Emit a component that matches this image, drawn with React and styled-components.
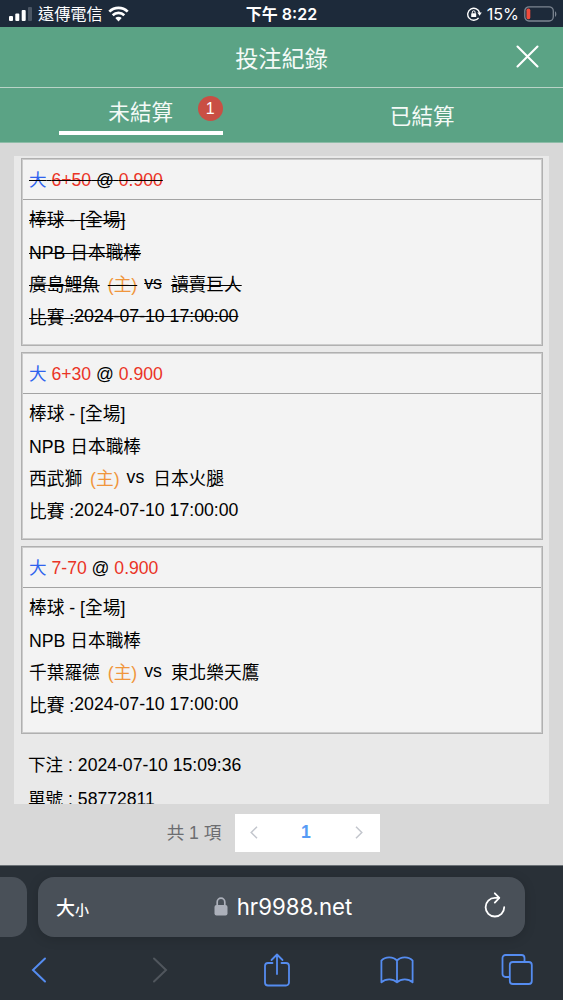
import React from "react";
import styled, { createGlobalStyle } from "styled-components";

const GlobalStyle = createGlobalStyle`
  * {
    box-sizing: border-box;
  }

  body {
    margin: 0;
    font-family: "Liberation Sans", "Noto Sans CJK TC", sans-serif;
  }
`;

const Screen = styled.div`
  display: flex;
  flex-direction: column;
  width: 563px;
  height: 1000px;
  overflow: hidden;
  background-color: #d8d8d8;
  color: #000;
  white-space: nowrap;
`;

const StatusBar = styled.div`
  display: grid;
  grid-template-columns: 1fr auto 1fr;
  align-items: center;
  height: 27px;
  padding: 1px 6px 0 9px;
  background-color: #1d2a3a;
  color: #fff;
  font-family: Inter, "Noto Sans CJK TC", sans-serif;
  font-size: 16.2px;
  line-height: 26px;
`;

const StatusSide = styled.div`
  display: flex;
  align-items: center;
  justify-content: ${props => (props.$end ? "flex-end" : "flex-start")};
  gap: 5px;
`;

const Time = styled.div`
  padding-right: 3px;
  font-weight: 600;
  font-size: 16px;
`;

const Header = styled.div`
  display: grid;
  grid-template-columns: 1fr auto 1fr;
  align-items: center;
  height: 61px;
  padding: 3px 24px 0;
  border-bottom: 1px solid #b9d3c7;
  background-color: #5ba385;
`;

const Title = styled.div`
  grid-column: 2;
  color: #f4faf7;
  font-size: 23.2px;
  line-height: 30px;
`;

const CloseButton = styled.div`
  justify-self: end;
  height: 28px;
`;

const Tabs = styled.div`
  display: grid;
  grid-template-columns: 1fr 1fr;
  height: 55px;
  background-color: #5ba385;
  border-bottom: 1px solid #8dbca7;
`;

const Tab = styled.div`
  display: flex;
  justify-content: center;
  color: #f4faf7;
  font-size: 21.6px;
  line-height: 57px;
`;

const ActiveLabel = styled.div`
  position: relative;
  width: 164px;
  height: 47px;
  border-bottom: 4px solid #fff;
  text-align: center;
  line-height: 49px;
`;

const Badge = styled.span`
  position: absolute;
  top: 8px;
  right: 0;
  width: 25px;
  height: 25px;
  border-radius: 50%;
  background-color: #c94f44;
  color: #fff;
  font-size: 16px;
  line-height: 25px;
`;

const Content = styled.div`
  flex: 1;
  display: flex;
  flex-direction: column;
  padding: 13px 14px 0;
`;

const BetList = styled.div`
  display: flex;
  flex-direction: column;
  gap: 6px;
  height: 648px;
  padding: 2px 6px 0 7px;
  overflow: hidden;
  background-color: #e9e9e9;
  font-size: 17.6px;
`;

const Card = styled.div`
  flex: none;
  height: 188px;
  border: 1px solid #b0b0b0;
  background-color: #f3f3f3;
  box-shadow: inset 0 0 0 1px #cccccc;
  padding: 1px;
`;

const Text = styled.span`
  color: ${props => props.$color || "#000"};
`;

const Struck = styled.span`
  text-decoration: ${props => (props.$on ? "line-through #000 1px" : "none")};
`;

const CardHead = styled.div`
  height: 40px;
  padding-left: 6px;
  border-bottom: 1px solid #a3a3a3;
  line-height: 40px;
`;

const CardBody = styled.div`
  padding: 4px 6px 0;
  font-size: 17.7px;
`;

const Line = styled.div`
  display: flex;
  height: 32.5px;
  line-height: 32.5px;
`;

const Versus = styled(Struck)`
  margin: -2px 9px 0 7px;
`;

const Home = styled(Struck)`
  margin-left: 8px;
  color: #f0963c;
`;

const MatchDate = styled(Struck)`
  margin-top: -2px;
`;

const Slip = styled.div`
  padding: 8px 7px;
  line-height: 34px;
`;

const Pagination = styled.div`
  display: flex;
  align-items: center;
  justify-content: center;
  gap: 14px;
  height: 38px;
  margin-top: 10px;
  padding-right: 16px;
  color: #6c6d70;
  font-size: 17.6px;
`;

const Total = styled.span`
  padding-bottom: 3px;
`;

const Pager = styled.div`
  display: grid;
  grid-template-columns: 38px 1fr 42px;
  align-items: center;
  justify-items: center;
  width: 145px;
  height: 38px;
  padding-bottom: 1px;
  background-color: #fff;
`;

const PageNumber = styled.span`
  color: #569bf5;
  font-weight: bold;
`;

const Browser = styled.div`
  height: 135px;
  border-top: 1px solid #6b7176;
  background-color: #293037;
`;

const AddressRow = styled.div`
  display: flex;
  gap: 11px;
  padding-top: 11px;
`;

const PreviousTab = styled.div`
  width: 27px;
  height: 60px;
  border-radius: 0 15px 15px 0;
  background-color: #495058;
`;

const AddressBar = styled.div`
  display: grid;
  grid-template-columns: 1fr auto 1fr;
  align-items: center;
  width: 487px;
  height: 60px;
  padding: 0 19px 2px 18px;
  border-radius: 16px;
  background-color: #495058;
  box-shadow: 0 2px 12px rgba(0, 0, 0, 0.15);
  color: #fff;
  font-family: Inter, "Noto Sans CJK TC", sans-serif;
`;

const TextSize = styled.div`
  font-size: 19px;
  font-weight: 500;

  small {
    font-size: 14px;
  }
`;

const Address = styled.div`
  display: flex;
  align-items: center;
  gap: 9px;
  padding-left: 4px;
  font-size: 22.2px;
`;

const Reload = styled.div`
  justify-self: end;
  height: 28px;
`;

const Toolbar = styled.div`
  display: flex;
  align-items: center;
  justify-content: space-between;
  height: 64px;
  padding: 1px 30px 0 23px;
`;

const bets = [
  { pick: "6+50", home: "廣島鯉魚", away: "讀賣巨人", cancelled: true },
  { pick: "6+30", home: "西武獅", away: "日本火腿", cancelled: false },
  { pick: "7-70", home: "千葉羅德", away: "東北樂天鷹", cancelled: false }
];

const SignalIcon = () => (
  <svg width="24" height="14" viewBox="0 0 24 14" fill="#fff">
    <rect x="0" y="9" width="4" height="5" rx="1" />
    <rect x="6.3" y="6.5" width="4" height="7.5" rx="1" />
    <rect x="12.7" y="3" width="4" height="11" rx="1" />
    <rect x="19" y="0" width="4" height="14" rx="1" fill="#4b5664" />
  </svg>
);

const WifiIcon = () => (
  <svg width="21" height="16" viewBox="0 0 21 16" fill="none" stroke="#fff">
    <path d="M1.3 5.6a13.2 13.2 0 0 1 18.4 0" strokeWidth="2.7" />
    <path d="M4.7 9.2a8.3 8.3 0 0 1 11.6 0" strokeWidth="2.6" />
    <path d="M10.5 15.4l-3.2-3.3a4.6 4.6 0 0 1 6.4 0z" fill="#fff" stroke="none" />
  </svg>
);

const RotationLockIcon = () => (
  <svg width="15" height="14" viewBox="0 0 15 14" fill="none" stroke="#fff">
    <path d="M11.6 10.8A6 6 0 1 1 12.6 6" strokeWidth="1.4" />
    <path d="M10.3 5.6h4.5l-2.2 3.2z" fill="#fff" stroke="none" />
    <rect x="4.2" y="6.3" width="5" height="3.8" rx="0.6" fill="#fff" stroke="none" />
    <path d="M5.3 6.5V5.2a1.4 1.4 0 0 1 2.8 0v1.3" strokeWidth="1" />
  </svg>
);

const BatteryIcon = () => (
  <svg width="33" height="16" viewBox="0 0 33 16">
    <rect x="0.8" y="0.8" width="28.5" height="14.2" rx="4.2" fill="none" stroke="#7c8591" strokeWidth="1.3" />
    <rect x="2.5" y="2.6" width="3.8" height="10.6" rx="1.6" fill="#ee4b3c" />
    <path d="M31 5.2c1.8.8 1.8 4.8 0 5.6z" fill="#7c8591" />
  </svg>
);

const Bet = ({ bet }) => (
  <Card>
    <CardHead>
      <Struck $on={bet.cancelled}>
        <Text $color="#2f63ee">大</Text> <Text $color="#ea3326">{bet.pick}</Text> @{" "}
        <Text $color="#ea3326">0.900</Text>
      </Struck>
    </CardHead>
    <CardBody>
      <Line>
        <Struck $on={bet.cancelled}>棒球 - [全場]</Struck>
      </Line>
      <Line>
        <Struck $on={bet.cancelled}>NPB 日本職棒</Struck>
      </Line>
      <Line>
        <Struck $on={bet.cancelled}>{bet.home}</Struck>
        <Home $on={bet.cancelled}>(主)</Home>
        <Versus $on={bet.cancelled}>vs</Versus>
        <Struck $on={bet.cancelled}>{bet.away}</Struck>
      </Line>
      <Line>
        <Struck $on={bet.cancelled}>比賽 :</Struck>
        <MatchDate $on={bet.cancelled}>2024-07-10 17:00:00</MatchDate>
      </Line>
    </CardBody>
  </Card>
);

const App = () => (
  <>
    <GlobalStyle />
    <Screen>
      <StatusBar>
        <StatusSide>
          <SignalIcon />
          <span>遠傳電信</span>
          <WifiIcon />
        </StatusSide>
        <Time>下午 8:22</Time>
        <StatusSide $end>
          <RotationLockIcon />
          <span>15%</span>
          <BatteryIcon />
        </StatusSide>
      </StatusBar>
      <Header>
        <Title>投注紀錄</Title>
        <CloseButton>
          <svg width="23" height="23" viewBox="0 0 23 23" stroke="#fff" strokeWidth="2.1" strokeLinecap="round">
            <path d="M1.5 1.5l20 20M21.5 1.5l-20 20" />
          </svg>
        </CloseButton>
      </Header>
      <Tabs>
        <Tab>
          <ActiveLabel>
            未結算
            <Badge>1</Badge>
          </ActiveLabel>
        </Tab>
        <Tab>已結算</Tab>
      </Tabs>
      <Content>
        <BetList>
          {bets.map(bet => (
            <Bet key={bet.pick} bet={bet} />
          ))}
          <Slip>
            <div>下注 : 2024-07-10 15:09:36</div>
            <div>單號 : 58772811</div>
          </Slip>
        </BetList>
        <Pagination>
          <Total>共 1 項</Total>
          <Pager>
            <svg width="8" height="13" viewBox="0 0 8 13" fill="none" stroke="#c3c6cd" strokeWidth="1.5">
              <path d="M7 .7L1.2 6.5 7 12.3" />
            </svg>
            <PageNumber>1</PageNumber>
            <svg width="8" height="13" viewBox="0 0 8 13" fill="none" stroke="#c3c6cd" strokeWidth="1.5">
              <path d="M1 .7l5.8 5.8L1 12.3" />
            </svg>
          </Pager>
        </Pagination>
      </Content>
      <Browser>
        <AddressRow>
          <PreviousTab />
          <AddressBar>
            <TextSize>
              大<small>小</small>
            </TextSize>
            <Address>
              <svg width="14" height="19" viewBox="0 0 14 19">
                <rect x="0.5" y="8" width="13" height="10.5" rx="2" fill="#acb0ba" />
                <path d="M3.2 8.5V5a3.8 3.8 0 0 1 7.6 0v3.5" fill="none" stroke="#acb0ba" strokeWidth="1.7" />
              </svg>
              <span>hr9988.net</span>
            </Address>
            <Reload>
              <svg width="22" height="26" viewBox="0 0 22 26" fill="none" stroke="#fff" strokeWidth="1.8" strokeLinecap="round" strokeLinejoin="round">
                <path d="M20.2 15.2a9.3 9.3 0 1 1-9.3-9.3h3.8" />
                <path d="M10.8 1.3l4.5 4.6-4.5 4.7" />
              </svg>
            </Reload>
          </AddressBar>
        </AddressRow>
        <Toolbar>
          <svg width="32" height="26" viewBox="0 0 32 26" fill="none" stroke="#558cf0" strokeWidth="2" strokeLinecap="round">
            <path d="M22 1.500L10 13l12 11.500" />
          </svg>
          <svg width="32" height="26" viewBox="0 0 32 26" fill="none" stroke="#50565d" strokeWidth="2" strokeLinecap="round">
            <path d="M12 1.500L24 13 12 24.500" />
          </svg>
          <svg width="32" height="34" viewBox="0 0 32 34" fill="none" stroke="#558cf0" strokeWidth="1.8" strokeLinecap="round" strokeLinejoin="round">
            <path d="M11.500 10H7a3 3 0 0 0-3 3v16.500a3 3 0 0 0 3 3h18a3 3 0 0 0 3-3V13a3 3 0 0 0-3-3h-4.500M16 21V1.500M10.500 7L16 1.500 21.500 7" />
          </svg>
          <svg width="34" height="28" viewBox="0 0 34 28" fill="none" stroke="#558cf0" strokeWidth="1.8" strokeLinejoin="round">
            <path d="M17 4.600C13.500.2 5 .2 1.400 4.600V26.300c4.200-3.800 11.500-3.800 15.600 0 4.100-3.800 11.400-3.800 15.600 0V4.600C29 .2 20.500.2 17 4.600zM17 4.600v21.700" />
          </svg>
          <svg width="32" height="31" viewBox="0 0 32 31" fill="none" stroke="#558cf0" strokeWidth="1.800">
            <path d="M8.500 23H4.500a3 3 0 0 1-3-3V4a3 3 0 0 1 3-3h16a3 3 0 0 1 3 3v4" />
            <rect x="8.800" y="8" width="22" height="22" rx="3" />
          </svg>
        </Toolbar>
      </Browser>
    </Screen>
  </>
);

export default App;
